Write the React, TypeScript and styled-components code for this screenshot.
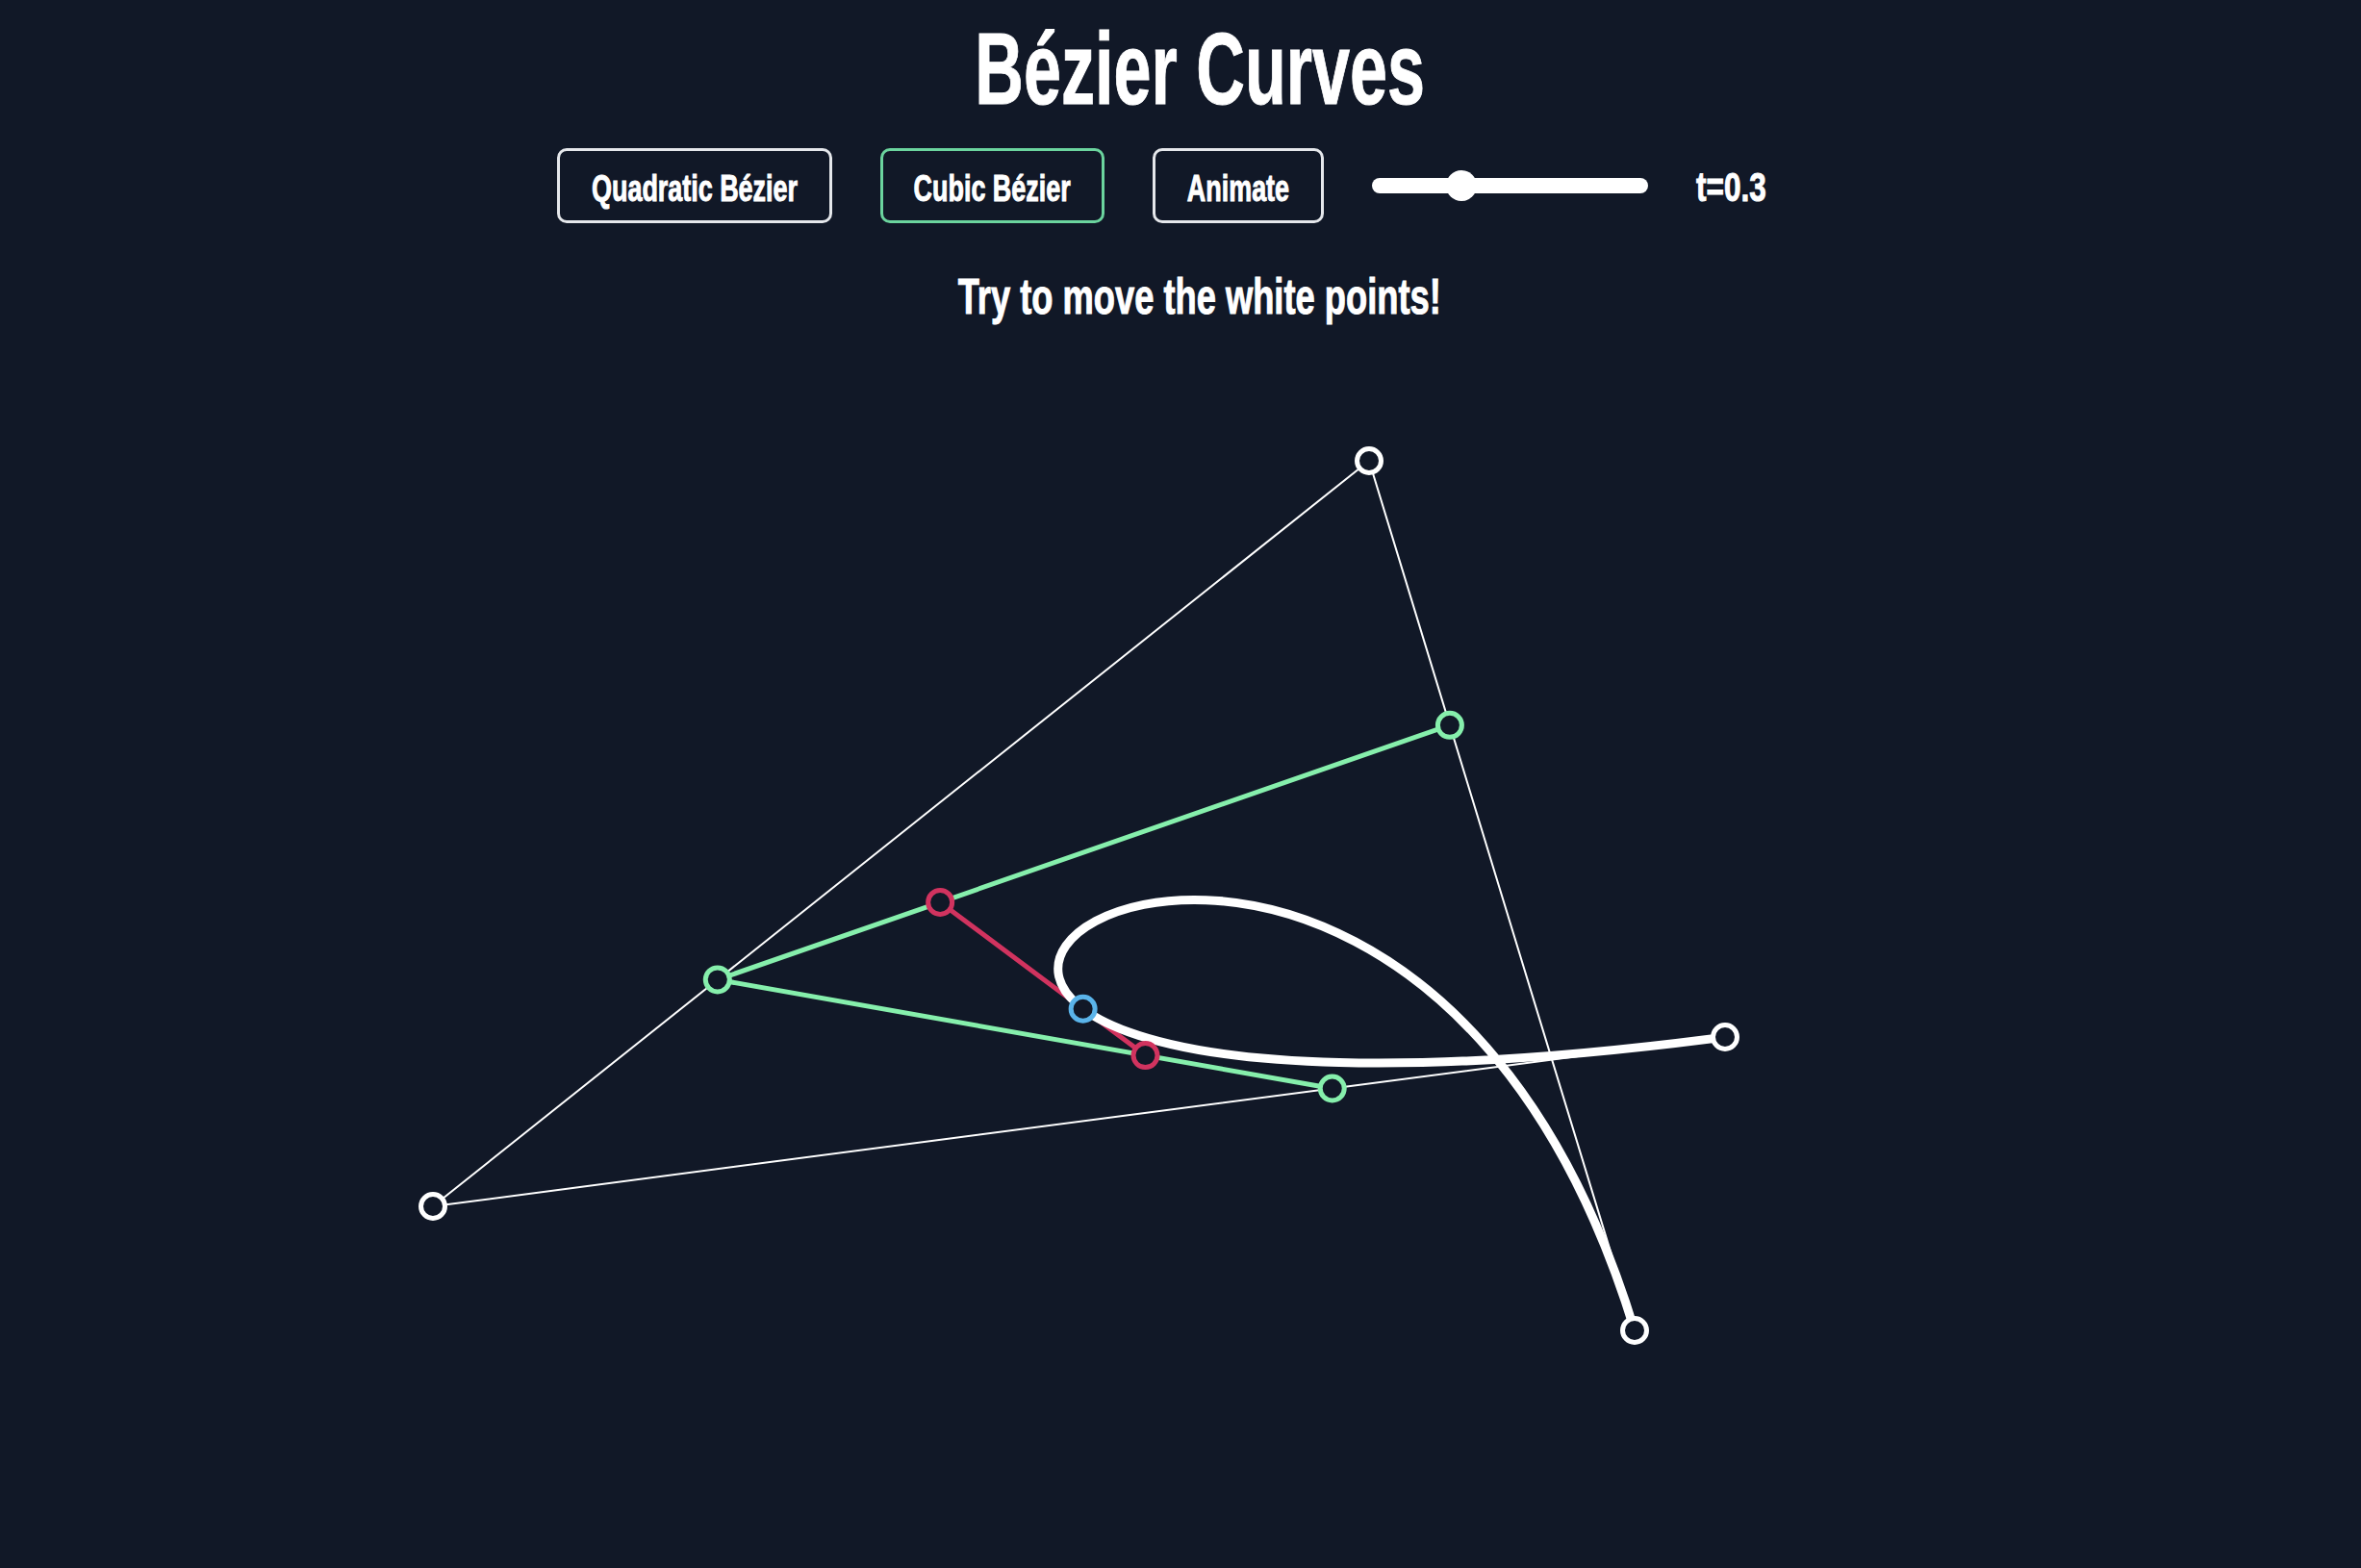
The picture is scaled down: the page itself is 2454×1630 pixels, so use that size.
import React, { useState } from 'react';
import styled, { createGlobalStyle } from 'styled-components';

type Pt = { x: number; y: number };

const HEADER_HEIGHT = 334;
const BG = '#111827';

const GlobalStyle = createGlobalStyle`
  html, body {
    margin: 0;
    padding: 0;
    background: ${BG};
    overflow: hidden;
  }
  #root {
    height: 100vh;
  }
`;

const Page = styled.div`
  display: flex;
  flex-direction: column;
  height: 100vh;
  color: #ffffff;
  font-family: 'Liberation Sans', Arial, sans-serif;
  font-weight: 700;
`;

const Header = styled.header`
  display: flex;
  flex-direction: column;
  align-items: center;
  height: ${HEADER_HEIGHT}px;
  padding-left: 40px;
  box-sizing: border-box;
  flex-shrink: 0;
`;

// no condensed face is installed, so the narrow display face is imitated by squeezing a bold sans
const Condensed = styled.span<{ $squeeze: number; $origin?: string }>`
  display: inline-block;
  white-space: nowrap;
  transform: scaleX(${(p) => p.$squeeze});
  transform-origin: ${(p) => p.$origin ?? 'center'};
  -webkit-text-stroke: 1px #ffffff;
`;

const Title = styled.h1`
  margin: 19px 0 0;
  font-size: 105px;
  line-height: 1;
  font-weight: 700;
  -webkit-text-stroke: 1.5px #ffffff;
`;

const Controls = styled.div`
  display: flex;
  align-items: center;
  gap: 50px;
  margin-top: 30px;
`;

const ModeButton = styled.button<{ $active?: boolean; $w: number }>`
  display: flex;
  align-items: center;
  justify-content: center;
  width: ${(p) => p.$w}px;
  height: 78px;
  padding: 5px 0 0;
  box-sizing: border-box;
  border: 3.5px solid ${(p) => (p.$active ? '#6bd49e' : '#e5e7eb')};
  border-radius: 10px;
  background: transparent;
  color: #ffffff;
  font-family: inherit;
  font-size: 39px;
  line-height: 1;
  font-weight: 700;
  cursor: pointer;
`;

const Slider = styled.input`
  appearance: none;
  -webkit-appearance: none;
  width: 287px;
  height: 32px;
  margin: 0;
  background: transparent;
  cursor: pointer;

  &::-webkit-slider-runnable-track {
    height: 16px;
    border-radius: 8px;
    background: #ffffff;
  }
  &::-webkit-slider-thumb {
    -webkit-appearance: none;
    width: 32px;
    height: 32px;
    margin-top: -8px;
    border-radius: 50%;
    background: #ffffff;
  }
`;

const TLabel = styled.span`
  width: 153px;
  font-size: 42px;
  line-height: 1;
  padding-top: 4px;
`;

const Hint = styled.p`
  margin: 50px 0 0;
  font-size: 52px;
  line-height: 1;
`;

const Canvas = styled.svg`
  display: block;
  width: 100%;
  flex: 1;
`;

const lerp = (a: Pt, b: Pt, t: number): Pt => ({
  x: a.x + (b.x - a.x) * t,
  y: a.y + (b.y - a.y) * t,
});

const Dot = ({ p, color }: { p: Pt; color: string }) => (
  <circle cx={p.x} cy={p.y} r={12.5} fill={BG} stroke={color} strokeWidth={5} />
);

const Segment = ({ a, b, color, width }: { a: Pt; b: Pt; color: string; width: number }) => (
  <line x1={a.x} y1={a.y} x2={b.x} y2={b.y} stroke={color} strokeWidth={width} strokeLinecap="round" />
);

export default function App() {
  const [t, setT] = useState(0.304);
  const [mode, setMode] = useState<'quadratic' | 'cubic'>('cubic');

  const p0: Pt = { x: 1793, y: 1078 };
  const p1: Pt = { x: 450, y: 1254 };
  const p2: Pt = { x: 1423, y: 479 };
  const p3: Pt = { x: 1699, y: 1383 };

  const g0 = lerp(p0, p1, t);
  const g1 = lerp(p1, p2, t);
  const g2 = lerp(p2, p3, t);
  const r0 = lerp(g0, g1, t);
  const r1 = lerp(g1, g2, t);
  const b = lerp(r0, r1, t);

  return (
    <Page>
      <GlobalStyle />
      <Header>
        <Title>
          <Condensed $squeeze={0.668}>Bézier Curves</Condensed>
        </Title>
        <Controls>
          <ModeButton $w={286} $active={mode === 'quadratic'} onClick={() => setMode('quadratic')}>
            <Condensed $squeeze={0.69}>Quadratic Bézier</Condensed>
          </ModeButton>
          <ModeButton $w={233} $active={mode === 'cubic'} onClick={() => setMode('cubic')}>
            <Condensed $squeeze={0.69}>Cubic Bézier</Condensed>
          </ModeButton>
          <ModeButton $w={178}>
            <Condensed $squeeze={0.69}>Animate</Condensed>
          </ModeButton>
          <Slider
            type="range"
            min={0}
            max={1}
            step={0.001}
            value={t}
            onChange={(e) => setT(parseFloat(e.target.value))}
          />
          <TLabel>
            <Condensed $squeeze={0.75} $origin="left">
              t={t.toFixed(1)}
            </Condensed>
          </TLabel>
        </Controls>
        <Hint>
          <Condensed $squeeze={0.698}>Try to move the white points!</Condensed>
        </Hint>
      </Header>
      <Canvas viewBox={`0 ${HEADER_HEIGHT} 2454 ${1630 - HEADER_HEIGHT}`} preserveAspectRatio="xMinYMin meet">
        <Segment a={p0} b={p1} color="#ffffff" width={2} />
        <Segment a={p1} b={p2} color="#ffffff" width={2} />
        <Segment a={p2} b={p3} color="#ffffff" width={2} />
        <Segment a={g0} b={g1} color="#86efac" width={5} />
        <Segment a={g1} b={g2} color="#86efac" width={5} />
        <Segment a={r0} b={r1} color="#d1335f" width={5} />
        <path
          d={`M${p0.x} ${p0.y} C${p1.x} ${p1.y} ${p2.x} ${p2.y} ${p3.x} ${p3.y}`}
          fill="none"
          stroke="#ffffff"
          strokeWidth={9}
          strokeLinecap="round"
        />
        {[g0, g1, g2].map((p, i) => (
          <Dot key={`g${i}`} p={p} color="#86efac" />
        ))}
        {[r0, r1].map((p, i) => (
          <Dot key={`r${i}`} p={p} color="#d1335f" />
        ))}
        <Dot p={b} color="#5ab4ea" />
        {[p0, p1, p2, p3].map((p, i) => (
          <Dot key={`p${i}`} p={p} color="#ffffff" />
        ))}
      </Canvas>
    </Page>
  );
}
